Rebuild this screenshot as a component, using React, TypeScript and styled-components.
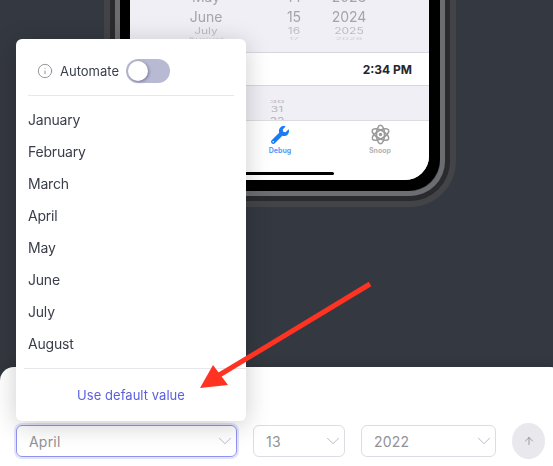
import React from "react";
import styled, { createGlobalStyle } from "styled-components";
import { ArrowUp, ChevronDown, Info } from "lucide-react";
import { FaWrench } from "react-icons/fa";

const months = ["January", "February", "March", "April", "May", "June", "July", "August"];

const GlobalStyle = createGlobalStyle`
  html, body {
    margin: 0;
    padding: 0;
    background: #343840;
    font-family: Inter, "Liberation Sans", sans-serif;
  }
`;

function SnoopIcon() {
  return (
    <svg width="21" height="21" viewBox="0 0 24 24" fill="none" stroke="currentColor" strokeWidth="1.8">
      <circle cx="12" cy="12" r="2" fill="currentColor" stroke="none" />
      <ellipse cx="12" cy="12" rx="4.6" ry="10.6" />
      <ellipse cx="12" cy="12" rx="4.6" ry="10.6" transform="rotate(60 12 12)" />
      <ellipse cx="12" cy="12" rx="4.6" ry="10.6" transform="rotate(120 12 12)" />
    </svg>
  );
}

export default function App() {
  return (
    <Stage>
      <GlobalStyle />
      <Backdrop>
        <PhoneBand $color="#434447" $width={6} $radius={46}>
          <PhoneBand $color="#2b2b2e" $width={5} $radius={40}>
            <PhoneBand $color="#6c6d70" $width={5} $radius={35}>
              <PhoneBezel>
                <PhoneScreen>
                  <Wheel>
                    <WheelRow $tone="#a4a4a9" $size={14} $height={24}>
                      <MonthCell>May</MonthCell>
                      <DayCell>14</DayCell>
                      <YearCell>2023</YearCell>
                    </WheelRow>
                    <WheelRow $tone="#a4a4a9" $size={14} $height={16}>
                      <MonthCell>June</MonthCell>
                      <DayCell>15</DayCell>
                      <YearCell>2024</YearCell>
                    </WheelRow>
                    <WheelRow $tone="#bcbcc2" $size={12} $height={11} $squash={0.7}>
                      <MonthCell>July</MonthCell>
                      <DayCell>16</DayCell>
                      <YearCell>2025</YearCell>
                    </WheelRow>
                    <WheelRow $tone="#d0d0d6" $size={11} $height={5} $squash={0.3}>
                      <MonthCell>August</MonthCell>
                      <DayCell>17</DayCell>
                      <YearCell>2026</YearCell>
                    </WheelRow>
                  </Wheel>
                  <TimeRow>2:34 PM</TimeRow>
                  <SmallWheel>
                    <SmallNumber $squash={0.3}>30</SmallNumber>
                    <SmallNumber $squash={0.6}>31</SmallNumber>
                    <SmallNumber $squash={0.9}>32</SmallNumber>
                  </SmallWheel>
                  <TabBar>
                    <TabItem $active>
                      <TabIcon>
                        <FaWrench size={18} />
                      </TabIcon>
                      <TabLabel>Debug</TabLabel>
                    </TabItem>
                    <TabItem>
                      <TabIcon>
                        <SnoopIcon />
                      </TabIcon>
                      <TabLabel>Snoop</TabLabel>
                    </TabItem>
                  </TabBar>
                  <HomeBar />
                </PhoneScreen>
              </PhoneBezel>
            </PhoneBand>
          </PhoneBand>
        </PhoneBand>
      </Backdrop>

      <Sheet>
        <SelectBox $width={221} $focused>
          April
          <ChevronDown size={22} strokeWidth={1} />
        </SelectBox>
        <SelectBox $width={92}>
          13
          <ChevronDown size={22} strokeWidth={1} />
        </SelectBox>
        <SelectBox $width={135}>
          2022
          <ChevronDown size={22} strokeWidth={1} />
        </SelectBox>
        <SendButton>
          <ArrowUp size={12} strokeWidth={1.5} />
        </SendButton>
      </Sheet>

      <Popover>
        <AutomateRow>
          <Info size={16} strokeWidth={1.3} color="#85858c" />
          <AutomateLabel>Automate</AutomateLabel>
          <Toggle />
        </AutomateRow>
        <MonthList>
          {months.map((month) => (
            <MonthItem key={month}>{month}</MonthItem>
          ))}
        </MonthList>
        <PopoverFooter>Use default value</PopoverFooter>
      </Popover>

      <Pointer width="553" height="466" viewBox="0 0 553 466">
        <line x1="370" y1="284" x2="216" y2="377" stroke="#ff3322" strokeWidth="5" />
        <polygon points="200,388 213,365 228,385" fill="#ff3322" />
      </Pointer>
    </Stage>
  );
}

const Stage = styled.div`
  position: relative;
  width: 553px;
  height: 466px;
  overflow: hidden;
  display: flex;
  flex-direction: column;
  background: #343840;
`;

const Backdrop = styled.div`
  height: 367px;
  flex: none;
  padding-left: 104px;
  box-sizing: border-box;
`;

const PhoneBand = styled.div<{ $color: string; $width: number; $radius: number }>`
  width: fit-content;
  box-sizing: border-box;
  border: solid ${({ $color }) => $color};
  border-width: 0 ${({ $width }) => $width}px ${({ $width }) => $width}px;
  border-radius: 0 0 ${({ $radius }) => $radius}px ${({ $radius }) => $radius}px;
`;

const PhoneBezel = styled.div`
  width: 320px;
  height: 191px;
  box-sizing: border-box;
  padding: 0 11px 11px 10px;
  background: #000;
  border-radius: 0 0 32px 32px;
`;

const PhoneScreen = styled.div`
  position: relative;
  height: 100%;
  overflow: hidden;
  display: flex;
  flex-direction: column;
  background: #f0eff5;
  border-radius: 0 0 24px 24px;
  filter: blur(0.4px);
`;

const Wheel = styled.div`
  height: 52px;
  flex: none;
  display: flex;
  flex-direction: column;
  justify-content: flex-end;
  padding-bottom: 11px;
  box-sizing: border-box;
`;

const WheelRow = styled.div<{ $tone: string; $size: number; $height: number; $squash?: number }>`
  display: flex;
  flex: none;
  height: ${({ $height }) => $height}px;
  line-height: ${({ $height }) => $height}px;
  font-size: ${({ $size }) => $size}px;
  color: ${({ $tone }) => $tone};
  transform: scaleY(${({ $squash = 1 }) => $squash});
`;

const MonthCell = styled.span`
  width: 152px;
  text-align: center;
`;

const DayCell = styled.span`
  width: 24px;
  text-align: center;
`;

const YearCell = styled.span`
  width: 60px;
  margin-left: 13px;
  text-align: center;
`;

const TimeRow = styled.div`
  height: 34px;
  flex: none;
  box-sizing: border-box;
  display: flex;
  align-items: center;
  justify-content: flex-end;
  padding-right: 17px;
  background: #fff;
  border: solid #d8d8dc;
  border-width: 1px 0;
  font-size: 12px;
  font-weight: 700;
  color: #262628;
`;

const SmallWheel = styled.div`
  flex: none;
  height: 34px;
  overflow: hidden;
  display: flex;
  flex-direction: column;
  align-items: center;
  justify-content: flex-end;
  gap: 2px;
  padding-right: 5px;
`;

const SmallNumber = styled.span<{ $squash: number }>`
  height: ${({ $squash }) => Math.round(12 * $squash)}px;
  line-height: ${({ $squash }) => Math.round(12 * $squash)}px;
  font-size: 12px;
  color: #b4b4ba;
  transform: scaleY(${({ $squash }) => $squash});

  &:last-child {
    margin-bottom: -6px;
  }
`;

const TabBar = styled.div`
  flex: 1;
  position: relative;
  display: flex;
  justify-content: flex-end;
  gap: 50px;
  padding: 3px 24px 0 0;
  background: #fff;
  border-top: 1px solid #dcdcdf;
`;

const TabItem = styled.div<{ $active?: boolean }>`
  width: 50px;
  height: 32px;
  display: flex;
  flex-direction: column;
  align-items: center;
  gap: 1px;
  color: ${({ $active }) => ($active ? "#1a7cf5" : "#9a9a9a")};
`;

const TabIcon = styled.div`
  height: 21px;
  display: flex;
  align-items: center;
`;

const TabLabel = styled.span`
  font-size: 7px;
  font-weight: 700;
  opacity: 0.75;
`;

const HomeBar = styled.div`
  position: absolute;
  left: 60px;
  bottom: 5px;
  width: 144px;
  height: 3px;
  border-radius: 2px;
  background: #000;
`;

const Sheet = styled.div`
  flex: 1;
  display: flex;
  align-items: flex-end;
  gap: 16px;
  margin-right: -12px;
  padding: 0 20px 7px 16px;
  background: #fff;
  border-radius: 14px 14px 0 0;
  box-shadow: 0 -3px 8px rgba(0, 0, 0, 0.1);
`;

const SelectBox = styled.div<{ $width: number; $focused?: boolean }>`
  width: ${({ $width }) => $width}px;
  height: 32px;
  margin-bottom: 2px;
  box-sizing: border-box;
  flex: none;
  display: flex;
  align-items: center;
  justify-content: space-between;
  padding: 0 0 0 12px;
  border-radius: 6px;
  border: 1px solid ${({ $focused }) => ($focused ? "#8e93f2" : "#dcdce2")};
  box-shadow: ${({ $focused }) => ($focused ? "0 0 0 2px #e3e4fb" : "none")};
  font-size: 14px;
  letter-spacing: 0.2px;
  color: #929298;

  svg {
    color: #b2b2cc;
  }
`;

const SendButton = styled.div`
  width: 33px;
  height: 36px;
  flex: none;
  display: flex;
  align-items: center;
  justify-content: center;
  border-radius: 50%;
  background: #e8e8ed;
  color: #808088;
`;

const Popover = styled.div`
  position: absolute;
  left: 16px;
  top: 39px;
  width: 230px;
  height: 382px;
  box-sizing: border-box;
  display: flex;
  flex-direction: column;
  border-radius: 6px;
  background: #fff;
  box-shadow: 0 4px 26px rgba(0, 0, 0, 0.2);
`;

const AutomateRow = styled.div`
  height: 57px;
  margin: 0 12px;
  box-sizing: border-box;
  flex: none;
  display: flex;
  align-items: center;
  padding: 8px 0 0 9px;
  border-bottom: 1px solid #e8e8ec;
`;

const AutomateLabel = styled.span`
  margin: 0 7px 0 7px;
  font-size: 13px;
  color: #3a3d4a;
`;

const Toggle = styled.div`
  position: relative;
  width: 44px;
  height: 24px;
  border-radius: 12px;
  background: #b8bad3;

  &::after {
    content: "";
    position: absolute;
    left: 2px;
    top: 2px;
    width: 20px;
    height: 20px;
    border-radius: 50%;
    background: #fff;
    box-shadow: 1px 1px 3px rgba(40, 40, 80, 0.45);
  }
`;

const MonthList = styled.div`
  flex: none;
  display: flex;
  flex-direction: column;
  margin-left: 8px;
  padding: 7px 0 9px 4px;
  border-bottom: 1px solid #e8e8ec;
`;

const MonthItem = styled.div`
  height: 32px;
  display: flex;
  align-items: center;
  font-size: 14px;
  letter-spacing: -0.2px;
  color: #3a3d4a;
`;

const PopoverFooter = styled.div`
  flex: 1;
  display: flex;
  align-items: center;
  justify-content: center;
  font-size: 13px;
  letter-spacing: 0.05px;
  color: #5a5fe0;
`;

const Pointer = styled.svg`
  position: absolute;
  left: 0;
  top: 0;
  pointer-events: none;
`;
